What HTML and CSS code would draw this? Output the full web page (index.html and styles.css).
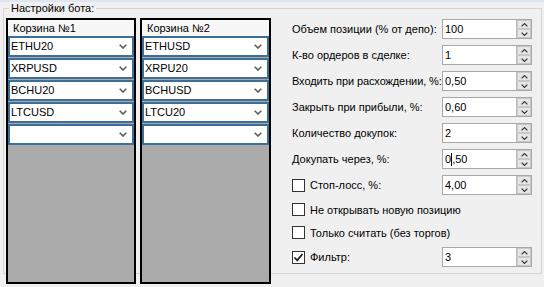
FILE: index.html
```html
<!DOCTYPE html>
<html>
<head>
<meta charset="utf-8">
<link rel="stylesheet" href="styles.css">
</head>
<body>
<div class="topband"></div>
<fieldset class="group">
  <legend class="gtitle">Настройки бота:</legend>
  <div class="content">
    <div class="basket">
      <div class="bhead">Корзина №1</div>
      <div class="combo"><span class="ctext">ETHU20</span><svg class="chev" viewBox="0 0 8 5"><polyline points="0.7,0.7 4,4 7.3,0.7"/></svg></div>
      <div class="combo"><span class="ctext">XRPUSD</span><svg class="chev" viewBox="0 0 8 5"><polyline points="0.7,0.7 4,4 7.3,0.7"/></svg></div>
      <div class="combo"><span class="ctext">BCHU20</span><svg class="chev" viewBox="0 0 8 5"><polyline points="0.7,0.7 4,4 7.3,0.7"/></svg></div>
      <div class="combo"><span class="ctext">LTCUSD</span><svg class="chev" viewBox="0 0 8 5"><polyline points="0.7,0.7 4,4 7.3,0.7"/></svg></div>
      <div class="combo"><span class="ctext"></span><svg class="chev" viewBox="0 0 8 5"><polyline points="0.7,0.7 4,4 7.3,0.7"/></svg></div>
    </div>
    <div class="basket b2">
      <div class="bhead">Корзина №2</div>
      <div class="combo"><span class="ctext">ETHUSD</span><svg class="chev" viewBox="0 0 8 5"><polyline points="0.7,0.7 4,4 7.3,0.7"/></svg></div>
      <div class="combo"><span class="ctext">XRPU20</span><svg class="chev" viewBox="0 0 8 5"><polyline points="0.7,0.7 4,4 7.3,0.7"/></svg></div>
      <div class="combo"><span class="ctext">BCHUSD</span><svg class="chev" viewBox="0 0 8 5"><polyline points="0.7,0.7 4,4 7.3,0.7"/></svg></div>
      <div class="combo"><span class="ctext">LTCU20</span><svg class="chev" viewBox="0 0 8 5"><polyline points="0.7,0.7 4,4 7.3,0.7"/></svg></div>
      <div class="combo"><span class="ctext"></span><svg class="chev" viewBox="0 0 8 5"><polyline points="0.7,0.7 4,4 7.3,0.7"/></svg></div>
    </div>
    <div class="params">
      <div class="row">
        <span class="lbl">Объем позиции (% от депо):</span>
        <div class="num"><span class="val">100</span><div class="spin"><div class="sb"><svg viewBox="0 0 7 4"><polyline points="0.6,3.4 3.5,0.6 6.4,3.4"/></svg></div><div class="sb"><svg viewBox="0 0 7 4"><polyline points="0.6,0.6 3.5,3.4 6.4,0.6"/></svg></div></div></div>
      </div>
      <div class="row">
        <span class="lbl">К-во ордеров в сделке:</span>
        <div class="num"><span class="val">1</span><div class="spin"><div class="sb"><svg viewBox="0 0 7 4"><polyline points="0.6,3.4 3.5,0.6 6.4,3.4"/></svg></div><div class="sb"><svg viewBox="0 0 7 4"><polyline points="0.6,0.6 3.5,3.4 6.4,0.6"/></svg></div></div></div>
      </div>
      <div class="row">
        <span class="lbl tight">Входить при расхождении, %:</span>
        <div class="num"><span class="val">0,50</span><div class="spin"><div class="sb"><svg viewBox="0 0 7 4"><polyline points="0.6,3.4 3.5,0.6 6.4,3.4"/></svg></div><div class="sb"><svg viewBox="0 0 7 4"><polyline points="0.6,0.6 3.5,3.4 6.4,0.6"/></svg></div></div></div>
      </div>
      <div class="row">
        <span class="lbl">Закрыть при прибыли, %:</span>
        <div class="num"><span class="val">0,60</span><div class="spin"><div class="sb"><svg viewBox="0 0 7 4"><polyline points="0.6,3.4 3.5,0.6 6.4,3.4"/></svg></div><div class="sb"><svg viewBox="0 0 7 4"><polyline points="0.6,0.6 3.5,3.4 6.4,0.6"/></svg></div></div></div>
      </div>
      <div class="row">
        <span class="lbl">Количество докупок:</span>
        <div class="num"><span class="val">2</span><div class="spin"><div class="sb"><svg viewBox="0 0 7 4"><polyline points="0.6,3.4 3.5,0.6 6.4,3.4"/></svg></div><div class="sb"><svg viewBox="0 0 7 4"><polyline points="0.6,0.6 3.5,3.4 6.4,0.6"/></svg></div></div></div>
      </div>
      <div class="row">
        <span class="lbl">Докупать через, %:</span>
        <div class="num"><span class="val">0<span class="caret"></span>,50</span><div class="spin"><div class="sb"><svg viewBox="0 0 7 4"><polyline points="0.6,3.4 3.5,0.6 6.4,3.4"/></svg></div><div class="sb"><svg viewBox="0 0 7 4"><polyline points="0.6,0.6 3.5,3.4 6.4,0.6"/></svg></div></div></div>
      </div>
      <div class="row">
        <span class="lbl chk"><span class="box"></span>Стоп-лосс, %:</span>
        <div class="num"><span class="val">4,00</span><div class="spin"><div class="sb"><svg viewBox="0 0 7 4"><polyline points="0.6,3.4 3.5,0.6 6.4,3.4"/></svg></div><div class="sb"><svg viewBox="0 0 7 4"><polyline points="0.6,0.6 3.5,3.4 6.4,0.6"/></svg></div></div></div>
      </div>
      <div class="row short">
        <span class="lbl chk wide"><span class="box"></span>Не открывать новую позицию</span>
      </div>
      <div class="row short">
        <span class="lbl chk wide"><span class="box"></span>Только считать (без торгов)</span>
      </div>
      <div class="row">
        <span class="lbl chk"><span class="box"><svg viewBox="0 0 11 11"><polyline points="1.5,5.5 4.2,8.3 9.5,2"/></svg></span>Фильтр:</span>
        <div class="num"><span class="val">3</span><div class="spin"><div class="sb"><svg viewBox="0 0 7 4"><polyline points="0.6,3.4 3.5,0.6 6.4,3.4"/></svg></div><div class="sb"><svg viewBox="0 0 7 4"><polyline points="0.6,0.6 3.5,3.4 6.4,0.6"/></svg></div></div></div>
      </div>
    </div>
  </div>
</fieldset>
</body>
</html>
```

FILE: styles.css
```css
html, body {
  margin: 0;
  padding: 0;
  background: #f0f0f0;
  font-family: "Liberation Sans", Arial, sans-serif;
  font-size: 11px;
  color: #000;
  width: 544px;
  height: 287px;
  overflow: hidden;
}
.topband {
  height: 2px;
  background: #dde7f0;
}
.group {
  margin: 0 2px 0 3px;
  padding: 3px 0 0 2px;
  border: 1px solid #d5d5d5;
  height: 267px;
  box-sizing: content-box;
  min-width: 0;
}
.gtitle {
  margin-left: 3px;
  padding: 0 2px;
  line-height: 13px;
  height: 13px;
}
.content {
  display: flex;
  align-items: flex-start;
}
.basket {
  width: 130px;
  height: 266px;
  box-sizing: border-box;
  border: 2px solid #000;
  background: #ababab;
  display: flex;
  flex-direction: column;
}
.b2 {
  width: 131px;
  margin-left: 4px;
}
.bhead {
  height: 16px;
  line-height: 16px;
  background: #f7f7f7;
  padding-left: 5px;
  box-sizing: border-box;
}
.combo {
  height: 21px;
  margin-bottom: 1px;
  box-sizing: border-box;
  border: 2px solid #3d6e98;
  background: #fff;
  display: flex;
  align-items: center;
  padding: 0 5px 0 1px;
}
.ctext {
  flex: 1;
  line-height: 17px;
}
.chev {
  width: 8px;
  height: 5px;
  fill: none;
  stroke: #5c5c5c;
  stroke-width: 1.6;
}
.params {
  margin-left: 21px;
  margin-top: 1px;
  display: flex;
  flex-direction: column;
  gap: 6px;
}
.row {
  display: flex;
  align-items: center;
  height: 20px;
}
.row.short {
  height: 17px;
}
.lbl {
  width: 150px;
  flex-shrink: 0;
  white-space: nowrap;
  display: flex;
  align-items: center;
}
.lbl.tight {
  letter-spacing: -0.1px;
}
.lbl.wide {
  width: auto;
}
.box {
  flex-shrink: 0;
  width: 13px;
  height: 13px;
  box-sizing: border-box;
  border: 1px solid #333;
  background: #fff;
  margin-right: 5px;
  display: flex;
  align-items: center;
  justify-content: center;
}
.box svg {
  width: 11px;
  height: 11px;
  fill: none;
  stroke: #222;
  stroke-width: 1.8;
}
.num {
  width: 90px;
  height: 20px;
  box-sizing: border-box;
  border: 1px solid #a8a8a8;
  background: #fff;
  display: flex;
}
.val {
  flex: 1;
  padding-left: 2px;
  line-height: 18px;
  display: flex;
  align-items: center;
}
.caret {
  display: inline-block;
  width: 1px;
  height: 13px;
  background: #000;
}
.spin {
  width: 14px;
  display: flex;
  flex-direction: column;
  border-left: 1px solid #bcbcbc;
}
.sb {
  flex: 1;
  background: #e6e6e6;
  border: 1px solid #c8c8c8;
  display: flex;
  align-items: center;
  justify-content: center;
}
.sb svg {
  width: 7px;
  height: 4px;
  fill: none;
  stroke: #333;
  stroke-width: 1.2;
}
```
